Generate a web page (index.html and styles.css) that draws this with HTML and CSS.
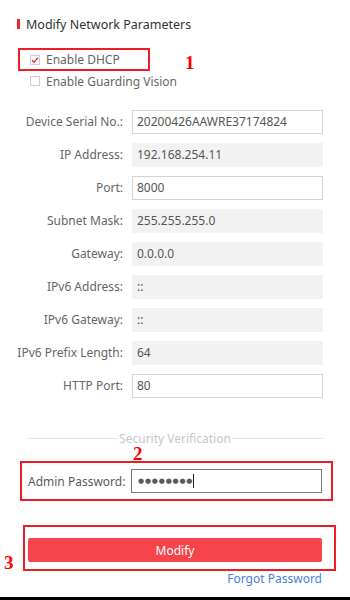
FILE: index.html
```html
<!DOCTYPE html>
<html>
<head>
<meta charset="utf-8">
<link rel="stylesheet" href="styles.css">
</head>
<body>
<div class="page">
  <div class="title">Modify Network Parameters</div>

  <div class="mark-box box1">
    <span class="cb checked"><svg width="10" height="10" viewBox="0 0 10 10"><path d="M2 5.2 L4.1 7.2 L8 2.6" fill="none" stroke="#e8262d" stroke-width="1.3"/></svg></span>
    <span class="cb-label">Enable DHCP</span>
  </div>
  <span class="num n1">1</span>

  <div class="check-row">
    <span class="cb"></span>
    <span class="cb-label">Enable Guarding Vision</span>
  </div>

  <div class="form">
    <label class="lbl">Device Serial No.:</label><div class="field">20200426AAWRE37174824</div>
    <label class="lbl">IP Address:</label><div class="field dis">192.168.254.11</div>
    <label class="lbl">Port:</label><div class="field">8000</div>
    <label class="lbl">Subnet Mask:</label><div class="field dis">255.255.255.0</div>
    <label class="lbl">Gateway:</label><div class="field dis">0.0.0.0</div>
    <label class="lbl">IPv6 Address:</label><div class="field dis">::</div>
    <label class="lbl">IPv6 Gateway:</label><div class="field dis">::</div>
    <label class="lbl">IPv6 Prefix Length:</label><div class="field dis">64</div>
    <label class="lbl">HTTP Port:</label><div class="field">80</div>
  </div>

  <div class="divider"><span>Security Verification</span></div>
  <span class="num n2">2</span>

  <div class="mark-box box2">
    <label class="pw-lbl">Admin Password:</label>
    <div class="field pw"><span class="dots">●●●●●●●●</span><span class="caret"></span></div>
  </div>

  <span class="num n3">3</span>
  <div class="mark-box box3">
    <button class="btn">Modify</button>
  </div>

  <div class="link-row"><a class="link">Forgot Password</a></div>
</div>
<div class="bottom-line"></div>
</body>
</html>
```
FILE: styles.css
```css
html, body {
  margin: 0;
  padding: 0;
  background: #fff;
}
body {
  width: 350px;
  height: 600px;
  overflow: hidden;
  position: relative;
  font-family: "Noto Sans", "Open Sans", sans-serif;
  font-size: 12px;
  color: #555;
}
.page {
  height: 597px;
  padding-top: 17px;
  box-sizing: border-box;
  position: relative;
}
.bottom-line {
  height: 3px;
  background: #000;
}
.title {
  display: flex;
  align-items: center;
  height: 14px;
  margin-left: 17px;
  font-size: 12.5px;
  color: #333;
}
.title::before {
  content: "";
  width: 3px;
  height: 10px;
  background: #e8262d;
  margin-right: 6px;
}
.mark-box {
  border: 2px solid #ee1c25;
  box-sizing: border-box;
  display: flex;
  align-items: center;
}
.box1 {
  margin-top: 17px;
  margin-left: 18px;
  width: 132px;
  height: 23px;
  padding-left: 10px;
}
.check-row {
  display: flex;
  align-items: center;
  height: 14px;
  margin-top: 3px;
  padding-left: 30px;
}
.cb {
  width: 10px;
  height: 10px;
  border: 1px solid #cfcfcf;
  box-sizing: border-box;
  display: inline-flex;
  align-items: center;
  justify-content: center;
  flex: none;
}
.cb svg { display: block; margin: -1px; }
.cb-label {
  margin-left: 6px;
  color: #666;
}
.form {
  margin-top: 22px;
  display: grid;
  grid-template-columns: 123px 191px;
  column-gap: 9px;
  row-gap: 9px;
}
.lbl {
  text-align: right;
  color: #666;
  line-height: 24px;
}
.field {
  height: 24px;
  box-sizing: border-box;
  border: 1px solid #d4d4d4;
  background: #fff;
  padding-left: 4px;
  line-height: 22px;
  color: #555;
}
.field.dis {
  background: #f2f2f2;
  border-color: #f2f2f2;
}
.divider {
  margin-top: 33px;
  margin-left: 27px;
  width: 296px;
  height: 14px;
  position: relative;
  display: flex;
  justify-content: center;
  align-items: center;
}
.divider::before {
  content: "";
  position: absolute;
  left: 0;
  right: 0;
  top: 7px;
  height: 1px;
  background: #e6e6e6;
}
.divider span {
  position: relative;
  background: #fff;
  color: #c8c8c8;
  padding: 0 1px;
}
.box2 {
  margin-top: 16px;
  margin-left: 20px;
  width: 313px;
  height: 40px;
  padding-left: 6px;
}
.pw-lbl {
  width: 103px;
  color: #5a5a5a;
}
.field.pw {
  width: 191px;
  border-color: #7a7a7a;
  display: flex;
  align-items: center;
  padding-left: 6px;
}
.dots {
  font-family: "DejaVu Sans", sans-serif;
  font-size: 7px;
  letter-spacing: 0.8px;
  color: #5a5a5a;
}
.caret {
  width: 1px;
  height: 14px;
  background: #222;
  margin-left: 0;
}
.box3 {
  margin-top: 24px;
  margin-left: 23px;
  width: 313px;
  height: 46px;
  padding-left: 3px;
  padding-top: 11px;
  align-items: flex-start;
}
.btn {
  width: 294px;
  height: 24px;
  border: none;
  border-radius: 2px;
  background: #f5444b;
  color: #fff;
  font-family: inherit;
  font-size: 12px;
  padding: 0;
}
.link-row {
  margin-top: 1px;
  text-align: right;
  padding-right: 28px;
  line-height: 14px;
}
.link {
  color: #4a7fe0;
}
.num {
  position: absolute;
  font-family: "Liberation Serif", serif;
  font-weight: bold;
  font-size: 19px;
  color: #ff0000;
  line-height: 1;
}
.n1 { left: 185px; top: 53px; }
.n2 { left: 133px; top: 444px; }
.n3 { left: 4px; top: 553px; }
```
